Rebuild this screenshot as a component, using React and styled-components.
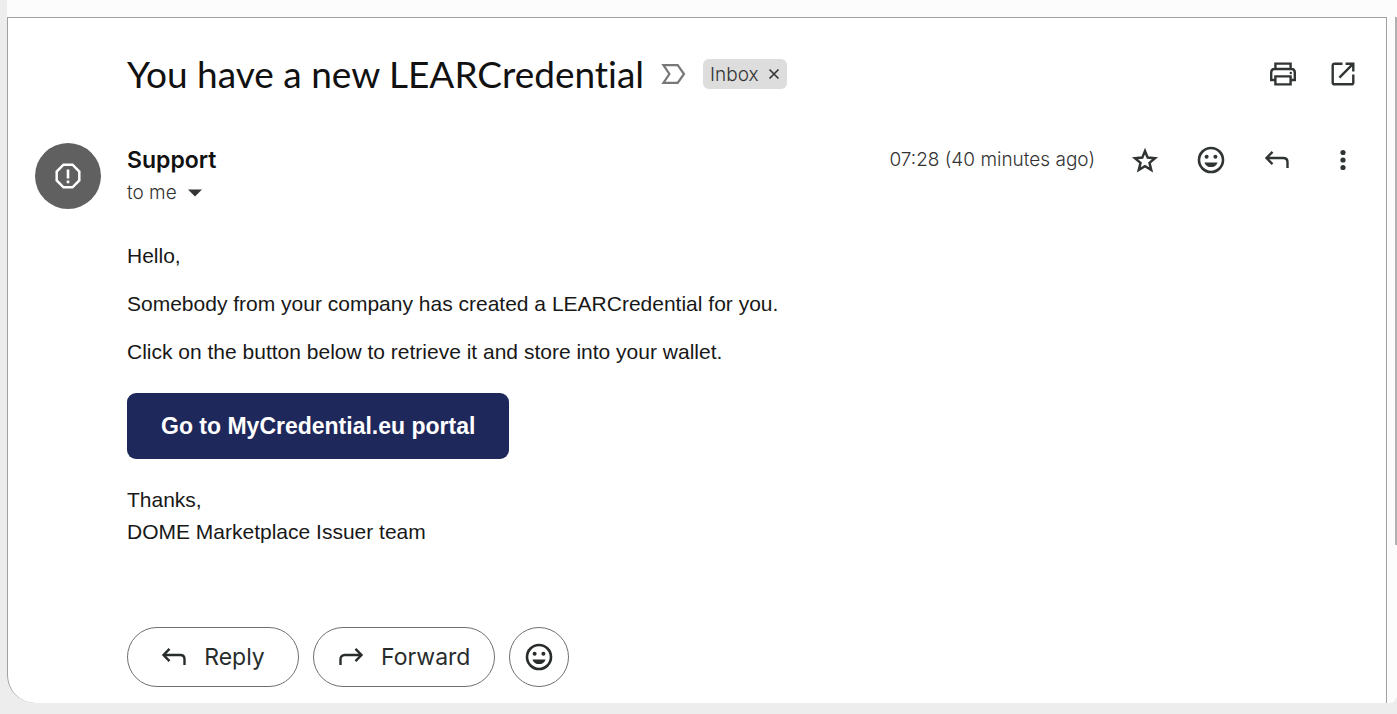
import React from "react";
import styled, { createGlobalStyle } from "styled-components";

const GlobalStyle = createGlobalStyle`
  *, *::before, *::after { box-sizing: border-box; }
  body {
    margin: 0;
    background: #ededed;
    color: #1f1f1f;
    font-family: Inter, "Liberation Sans", sans-serif;
  }
  button { font: inherit; color: inherit; cursor: pointer; }
`;

const Page = styled.div`
  display: flex;
  min-height: 100vh;
  padding: 0 0 11px 7px;
`;

const Pane = styled.div`
  display: flex;
  align-items: stretch;
  flex: 1;
  min-width: 0;
  padding-top: 17px;
  background: #fcfcfc;
  border-radius: 0 0 8px 28px;
`;

const Card = styled.main`
  flex: 1;
  min-width: 0;
  padding: 32px 27px 15px;
  background: #fff;
  border: 1px solid #a0a0a0;
  border-bottom: 0;
  border-bottom-left-radius: 28px;
`;

const ScrollGutter = styled.div`
  width: 10px;
  display: flex;
  justify-content: flex-end;
`;

const ScrollThumb = styled.div`
  width: 2px;
  height: 77%;
  background: #b0b0b0;
`;

const Columns = styled.div`
  display: grid;
  grid-template-columns: 66px minmax(0, 1fr);
  column-gap: 26px;
`;

const SubjectRow = styled.header`
  display: flex;
  align-items: center;
  gap: 17px;
  height: 48px;
  padding-left: 92px;
`;

const Subject = styled.h1`
  margin: 0;
  font: 400 37px/48px Lato, sans-serif;
  font-variant-ligatures: none;
  color: #111;
`;

const Label = styled.span`
  display: inline-flex;
  align-items: center;
  gap: 9px;
  height: 30px;
  padding: 0 7px;
  border-radius: 6px;
  background: #ddd;
  color: #333;
  font-size: 19px;
  font-weight: 300;
`;

const PlainButton = styled.button`
  display: inline-flex;
  padding: 0;
  border: 0;
  background: none;
`;

const IconGroup = styled.div`
  display: flex;
  align-items: center;
  gap: ${(p) => p.$gap}px;
  margin-left: auto;
`;

const IconButton = styled(PlainButton)`
  align-items: center;
  justify-content: center;
  width: 32px;
  height: 32px;
  color: #303534;
`;

const Avatar = styled.div`
  display: flex;
  align-items: center;
  justify-content: center;
  width: 66px;
  height: 66px;
  border-radius: 50%;
  background: #606060;
  color: #fff;
`;

const MessageHeader = styled(Columns)`
  margin-top: 45px;
`;

const SenderRow = styled.div`
  display: flex;
  align-items: center;
  height: 33px;
`;

const Sender = styled.span`
  font-size: 23px;
  font-weight: 600;
  color: #111;
`;

const SentAt = styled.time`
  font-size: 19px;
  font-weight: 300;
  color: #333;
`;

const Recipient = styled(PlainButton)`
  align-items: center;
  gap: 11px;
  height: 33px;
  font-size: 19px;
  font-weight: 300;
  color: #333;
`;

const Body = styled.div`
  padding: 31px 0 0 92px;
  font: 400 21px/32px "Liberation Sans", Arial, sans-serif;
  color: #181818;
`;

const Paragraph = styled.p`
  margin: 0 0 ${(p) => p.$after ?? 16}px;
`;

const PortalLink = styled.a`
  display: inline-flex;
  align-items: center;
  height: 66px;
  margin-bottom: 25px;
  padding: 0 34px;
  border-radius: 9px;
  background: #1f285b;
  color: #fff;
  font-size: 23px;
  font-weight: 700;
  text-decoration: none;
`;

const Actions = styled.div`
  display: flex;
  gap: 14px;
  padding: 79px 0 0 92px;
`;

const ActionButton = styled.button`
  display: inline-flex;
  align-items: center;
  justify-content: center;
  gap: 17px;
  height: 60px;
  min-width: ${(p) => (p.$round ? 60 : 172)}px;
  padding: 0 ${(p) => (p.$round ? 0 : 24)}px;
  border: 1px solid #6f6f6f;
  border-radius: 30px;
  background: #fff;
  color: #282d2c;
  font-size: 23px;
`;

function Svg({ w, h, children }) {
  return (
    <svg width={w} height={h} viewBox={`0 0 ${w} ${h}`} fill="none" stroke="currentColor" strokeWidth="2.4" aria-hidden="true">
      {children}
    </svg>
  );
}

const ReplyIcon = () => (
  <Svg w={26} h={20}>
    <path d="M8.5 1.8 2.5 8l6 6.2M2.8 8h16.4c2.6 0 4.3 1.7 4.3 4.2V18" />
  </Svg>
);

const ForwardIcon = () => (
  <Svg w={26} h={20}>
    <path d="m17.5 1.8 6 6.2-6 6.2M23.2 8H6.8c-2.6 0-4.3 1.7-4.3 4.2V18" />
  </Svg>
);

const SmileIcon = () => (
  <Svg w={28} h={28}>
    <circle cx="14" cy="14" r="12" strokeWidth="2.6" />
    <g fill="currentColor" stroke="none">
      <circle cx="9.6" cy="10.8" r="2" />
      <circle cx="18.4" cy="10.8" r="2" />
      <path d="M7.4 16.4h13.2c-1 3-3.6 4.7-6.6 4.7s-5.6-1.7-6.6-4.7z" />
    </g>
  </Svg>
);

const StarIcon = () => (
  <Svg w={28} h={28}>
    <path d="m14 5 2.7 6.6 7.3.6-5.5 4.7 1.7 7-6.2-3.7-6.2 3.7 1.7-7L4 12.2l7.3-.6z" strokeWidth="2.5" />
  </Svg>
);

const MoreIcon = () => (
  <Svg w={8} h={22}>
    <g fill="currentColor" stroke="none">
      <circle cx="4" cy="3.5" r="2.6" />
      <circle cx="4" cy="11" r="2.6" />
      <circle cx="4" cy="18.5" r="2.6" />
    </g>
  </Svg>
);

const PrintIcon = () => (
  <Svg w={28} h={26}>
    <path d="M6.4 8V2.6h15.2V8M6.4 19H2.2v-7.5C2.2 9.3 3.5 8 5.6 8h16.8c2.1 0 3.4 1.3 3.4 3.5V19h-4.2M6.4 15.4h15.2v8H6.4z" />
    <circle cx="21.8" cy="12" r="1.2" fill="currentColor" stroke="none" />
  </Svg>
);

const OpenIcon = () => (
  <Svg w={26} h={26}>
    <path d="M12.5 2.7H4.6c-1.2 0-1.9.7-1.9 1.9v16.8c0 1.2.7 1.9 1.9 1.9h16.8c1.2 0 1.9-.7 1.9-1.9v-7.9M15.6 2.7h7.7v7.7M22.8 3.2 9.4 16.6" />
  </Svg>
);

const ImportanceIcon = () => (
  <Svg w={25} h={22}>
    <path d="M2.4 2.2h14.3L23 11l-6.3 8.8H2.4L8.4 11z" stroke="#777" strokeWidth="2.2" />
  </Svg>
);

const AlertIcon = () => (
  <Svg w={26} h={26}>
    <path d="M8.5 1.7h9l6.8 6.8v9l-6.8 6.8h-9l-6.8-6.8v-9z" strokeWidth="2.5" />
    <path d="M13 6.5v9M13 17.4v2.8" strokeWidth="2.6" />
  </Svg>
);

export default function App() {
  return (
    <>
      <GlobalStyle />
      <Page>
        <Pane>
          <Card>
            <SubjectRow>
              <Subject>You have a new LEARCredential</Subject>
              <ImportanceIcon />
              <Label>
                Inbox
                <PlainButton aria-label="Remove label Inbox">
                  <Svg w={12} h={12}>
                    <path d="m1.5 1.5 9 9m0-9-9 9" strokeWidth="1.6" />
                  </Svg>
                </PlainButton>
              </Label>
              <IconGroup $gap={28}>
                <IconButton aria-label="Print"><PrintIcon /></IconButton>
                <IconButton aria-label="Open in new window"><OpenIcon /></IconButton>
              </IconGroup>
            </SubjectRow>

            <MessageHeader>
              <Avatar><AlertIcon /></Avatar>
              <div>
                <SenderRow>
                  <Sender>Support</Sender>
                  <IconGroup $gap={34}>
                    <SentAt>07:28 (40 minutes ago)</SentAt>
                    <IconButton aria-label="Star"><StarIcon /></IconButton>
                    <IconButton aria-label="Add reaction"><SmileIcon /></IconButton>
                    <IconButton aria-label="Reply"><ReplyIcon /></IconButton>
                    <IconButton aria-label="More"><MoreIcon /></IconButton>
                  </IconGroup>
                </SenderRow>
                <Recipient aria-label="Show details">
                  to me
                  <Svg w={14} h={8}>
                    <path d="M0 .5h14l-7 7z" fill="currentColor" stroke="none" />
                  </Svg>
                </Recipient>
              </div>
            </MessageHeader>

            <Body>
              <Paragraph>Hello,</Paragraph>
              <Paragraph>Somebody from your company has created a LEARCredential for you.</Paragraph>
              <Paragraph $after={25}>Click on the button below to retrieve it and store into your wallet.</Paragraph>
              <PortalLink href="#portal">Go to MyCredential.eu portal</PortalLink>
              <Paragraph $after={0}>
                Thanks,
                <br />
                DOME Marketplace Issuer team
              </Paragraph>
            </Body>

            <Actions>
              <ActionButton><ReplyIcon />Reply</ActionButton>
              <ActionButton><ForwardIcon />Forward</ActionButton>
              <ActionButton $round aria-label="Add reaction"><SmileIcon /></ActionButton>
            </Actions>
          </Card>
          <ScrollGutter><ScrollThumb /></ScrollGutter>
        </Pane>
      </Page>
    </>
  );
}
